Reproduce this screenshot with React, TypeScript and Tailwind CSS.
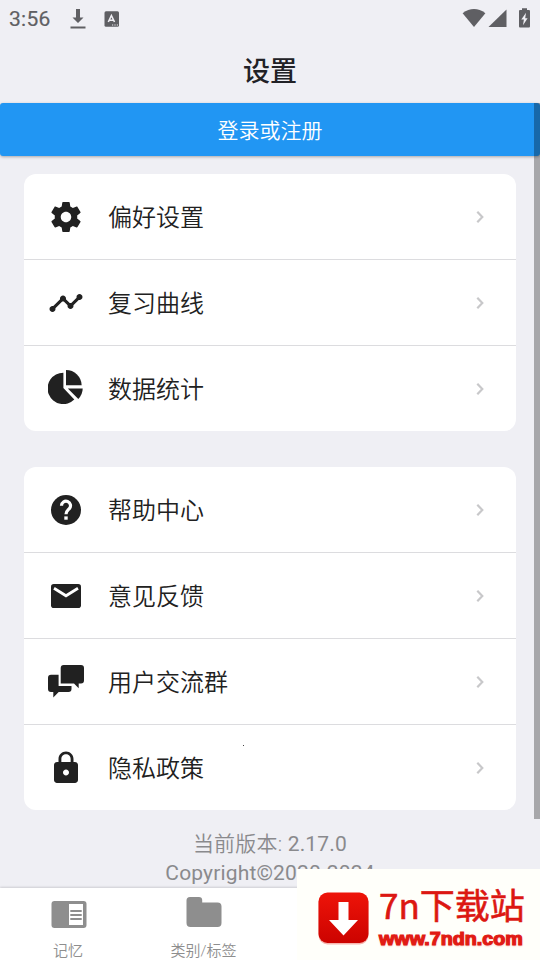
import React from "react";
import { MdLock, MdTimeline } from "react-icons/md";

interface SettingsItem {
  label: string;
  icon: React.ReactNode;
}

const generalItems: SettingsItem[] = [
  { label: "偏好设置", icon: <GearIcon /> },
  { label: "复习曲线", icon: <MdTimeline size={36} /> },
  { label: "数据统计", icon: <PieIcon /> },
];

const supportItems: SettingsItem[] = [
  { label: "帮助中心", icon: <HelpIcon /> },
  { label: "意见反馈", icon: <MailIcon /> },
  { label: "用户交流群", icon: <ChatIcon /> },
  { label: "隐私政策", icon: <MdLock size={36} /> },
];

function GearIcon() {
  return (
    <svg width="36" height="36" viewBox="0 0 24 24" fill="currentColor">
      <path d="M19.430 12.980c.04-.32.07-.64.07-.98s-.03-.66-.07-.98l2.110-1.650c.19-.15.24-.42.12-.64l-2-3.460c-.12-.22-.39-.3-.61-.22l-2.490 1c-.52-.4-1.080-.73-1.690-.98l-.38-2.650C14.460 2.180 14.250 2 14 2h-4c-.25 0-.46.18-.49.42l-.38 2.650c-.61.25-1.170.59-1.690.98l-2.490-1c-.23-.09-.49 0-.61.22l-2 3.460c-.13.22-.07.49.12.64l2.110 1.650c-.04.32-.07.65-.07.98s.03.66.07.98l-2.110 1.650c-.19.15-.24.42-.12.64l2 3.460c.12.22.39.3.61.22l2.490-1c.52.4 1.080.73 1.690.98l.38 2.650c.03.24.24.42.49.42h4c.25 0 .46-.18.49-.42l.38-2.650c.61-.25 1.170-.59 1.690-.98l2.490 1c.23.09.49 0 .61-.22l2-3.460c.12-.22.07-.49-.12-.64zM12 15.500c-1.930 0-3.500-1.570-3.500-3.500s1.570-3.500 3.500-3.500 3.500 1.570 3.500 3.500-1.570 3.500-3.500 3.500z" />
    </svg>
  );
}

function PieIcon() {
  return (
    <svg className="-translate-y-px" width="36" height="36" viewBox="0 0 36 36" fill="currentColor">
      <path d="M15.400 2.700V18L26.300 29.600A15.700 15.700 0 1 1 15.400 2.700z" />
      <path d="M18 0A15.700 15.700 0 0 1 33.700 15.300H18z" />
      <path d="M19.800 18.500H34.700A15.500 15.500 0 0 1 30.300 29z" />
    </svg>
  );
}

function HelpIcon() {
  return (
    <svg width="36" height="36" viewBox="0 0 36 36">
      <circle cx="18" cy="18" r="15" fill="currentColor" />
      <path d="M13.500 13.700a4.500 4.500 0 1 1 7.800 3c-1.700 1.800-3.300 2.500-3.300 5.600" fill="none" stroke="#fff" strokeWidth="3.200" />
      <path d="M16.300 24.400h3.400v3.300h-3.400z" fill="#fff" />
    </svg>
  );
}

function MailIcon() {
  return (
    <svg width="36" height="36" viewBox="0 0 36 36">
      <rect x="3" y="6" width="30" height="24" rx="2.800" fill="currentColor" />
      <path d="M6 10.300 18 17.800l12-7.500" fill="none" stroke="#fff" strokeWidth="2.800" />
    </svg>
  );
}

function ChatIcon() {
  return (
    <svg width="36" height="36" viewBox="0 0 36 36" fill="currentColor">
      <path d="M15.700 1H33a3 3 0 0 1 3 3v12.500a3 3 0 0 1-3 3h-2.300v4.800L26 19.500H12.700V4a3 3 0 0 1 3-3z" />
      <path d="M3 10.700h7.600V22h12.900v3a3 3 0 0 1-3 3H10.700l-5.400 5.500V28H3a3 3 0 0 1-3-3V13.700a3 3 0 0 1 3-3z" />
    </svg>
  );
}

function StatusBar() {
  return (
    <div className="flex h-[37px] items-center justify-between pl-[9px] pr-[9px] text-[#5f5f63]">
      <div className="flex items-center">
        <span className="w-[61px] text-[21px] font-normal leading-6 tracking-[0.3px] [-webkit-text-stroke:0.2px_#5f5f63]">3:56</span>
        <svg width="16" height="20" viewBox="0 0 16 20" fill="currentColor">
          <path d="M6 0h4v8.500h3.500L8 14 2.500 8.500H6z" />
          <path d="M.5 17.500h15v2H.5z" />
        </svg>
        <svg className="ml-[18px]" width="16" height="16" viewBox="0 0 16 16">
          <rect x=".5" y=".3" width="14.500" height="15.500" rx="1.500" fill="currentColor" />
          <path d="M4.300 11 7.400 4.500l3.100 6.500M5.500 9.200h3.900" fill="none" stroke="#f0eff4" strokeWidth="1.600" />
          <path d="M8 13.400h1.200v1.200H8zM10.400 13.400h1.200v1.200h-1.200zM12.800 13.400H14v1.200h-1.200z" fill="#f0eff4" />
        </svg>
      </div>
      <div className="flex items-center">
        <svg width="24" height="20" viewBox="0 0 24 20" fill="currentColor">
          <path d="M.6 4.200Q12-4.200 23.400 4.200L12 18z" />
        </svg>
        <svg className="ml-[2px]" width="19" height="20" viewBox="0 0 19 20" fill="currentColor">
          <path d="M18.500.5v17.500H.5z" />
        </svg>
        <svg className="ml-[11px] -translate-y-px" width="13" height="20" viewBox="0 0 13 20">
          <path d="M4 .2h5v1.800h1.700c.8 0 1.300.5 1.300 1.300v15c0 .8-.5 1.300-1.300 1.300H2.300C1.500 19.600 1 19.100 1 18.300v-15C1 2.500 1.500 2 2.300 2H4z" fill="currentColor" />
          <path d="M8 4.800 3.300 11.500h2.600L5 17.200l4.600-7H7.200z" fill="#f0eff4" />
        </svg>
      </div>
    </div>
  );
}

function SettingsGroup({ items }: { items: SettingsItem[] }) {
  return (
    <div className="mx-6 overflow-hidden rounded-xl bg-white">
      {items.map((item) => (
        <div
          key={item.label}
          className="flex h-[86px] items-center border-b border-[#dcdcdf] pl-6 pr-[26px] last:h-[85px] last:border-b-0"
        >
          <div className="w-9 shrink-0 text-[#212121]">{item.icon}</div>
          <span className="ml-6 flex-1 pt-[3px] text-[24px] font-[350] text-[#212121]">{item.label}</span>
          <svg width="20" height="20" viewBox="0 0 20 20" fill="none" stroke="#c8c8ca" strokeWidth="2.200">
            <path d="m7.300 4.800 5 5.200-5 5.200" />
          </svg>
        </div>
      ))}
    </div>
  );
}

function TabBar() {
  return (
    <div className="absolute inset-x-0 bottom-0 flex h-[72px] bg-white text-[#8e8e8e] shadow-[0_-1px_2px_rgba(0,0,0,0.14)]">
      <div className="flex w-[136px] flex-col items-center pt-[7px]">
        <svg className="ml-0.5 shrink-0" width="36" height="38" viewBox="0 0 36 38">
          <rect x=".5" y="6" width="35" height="27" rx="3" fill="currentColor" />
          <path d="M18 9h14v21H18z" fill="#fff" />
          <path d="M19.300 15h11.400v2H19.300zM19.300 19h11.400v2H19.300zM19.300 23h11.400v2H19.300z" fill="currentColor" />
        </svg>
        <span className="mt-1.5 text-[15px] font-[350] leading-6">记忆</span>
      </div>
      <div className="flex w-[135px] flex-col items-center pt-[7px]">
        <svg className="shrink-0" width="36" height="38" viewBox="0 0 36 38" fill="currentColor">
          <path d="M4 2h9c2 0 3.200 1.200 3.200 3v2.500H31.500a4 4 0 0 1 4 4V28a4 4 0 0 1-4 4H4.500a4 4 0 0 1-4-4V5.500A3.500 3.500 0 0 1 4 2z" />
        </svg>
        <span className="mt-1.5 text-[15px] font-[350] leading-6">类别/标签</span>
      </div>
    </div>
  );
}

function DownloadBanner() {
  return (
    <div className="absolute bottom-0 right-0 flex h-[91px] w-[243px] bg-[#fffffa] pl-[21px] pt-[23px]">
      <svg width="52" height="54" viewBox="0 0 52 54" className="shrink-0">
        <defs>
          <linearGradient id="badge" x1="0" y1="0" x2="0" y2="1">
            <stop offset="0" stopColor="#ee1409" />
            <stop offset="1" stopColor="#cc0300" />
          </linearGradient>
        </defs>
        <rect x=".5" y="1.500" width="50" height="51" rx="9" fill="#f7b5ae" />
        <rect x=".5" y=".5" width="50" height="50.500" rx="9" fill="url(#badge)" />
        <path d="M20.500 10h10v18H40L25.500 43.500 11 28h9.500z" fill="#fff" />
      </svg>
      <div className="ml-[9px] -mt-[8px] whitespace-nowrap">
        <div className="font-['Noto_Sans_CJK_SC',sans-serif] text-[35px] font-normal leading-[40px] text-[#dc1712] [-webkit-text-stroke:0.6px_#dc1712]">
          7n下载站
        </div>
        <div className="mt-[6px] origin-left scale-x-[1.095] font-['Liberation_Sans',sans-serif] text-[18px] font-bold leading-[18px] text-[#e11b14] [-webkit-text-stroke:1.2px_#e11b14] [text-shadow:0_1px_2px_#f3a8a2]">
          www.7ndn.com
        </div>
      </div>
    </div>
  );
}

export default function App() {
  return (
    <div className="relative h-[960px] w-[540px] overflow-hidden bg-[#efeff4] font-['Roboto','Noto_Sans_CJK_SC',sans-serif]">
      <StatusBar />
      <h1 className="flex h-[66px] items-center justify-center pt-[4px] text-[27px] font-medium text-[#212126]">
        设置
      </h1>
      <button className="relative block h-[53px] w-full rounded-[3px] bg-[#2196f3] pt-1 text-[21px] font-[350] text-white shadow-[0_1px_3px_rgba(0,0,0,0.3)]">
        登录或注册
      </button>
      <div className="flex flex-col gap-9 pt-[18px]">
        <SettingsGroup items={generalItems} />
        <SettingsGroup items={supportItems} />
      </div>
      <div className="pt-[20px] text-center text-[21px] leading-[29px] text-[#8a8a8d]">
        <p className="font-[350] tracking-[0.2px]">当前版本: <span className="font-normal">2.17.0</span></p>
        <p className="tracking-[0.15px]">Copyright©2020-2024</p>
      </div>
      <div className="absolute right-0 top-[103px] h-[716px] w-1.5 bg-black/30" />
      <div className="absolute left-[243px] top-[745px] size-px bg-[#444]" />
      <TabBar />
      <DownloadBanner />
    </div>
  );
}
